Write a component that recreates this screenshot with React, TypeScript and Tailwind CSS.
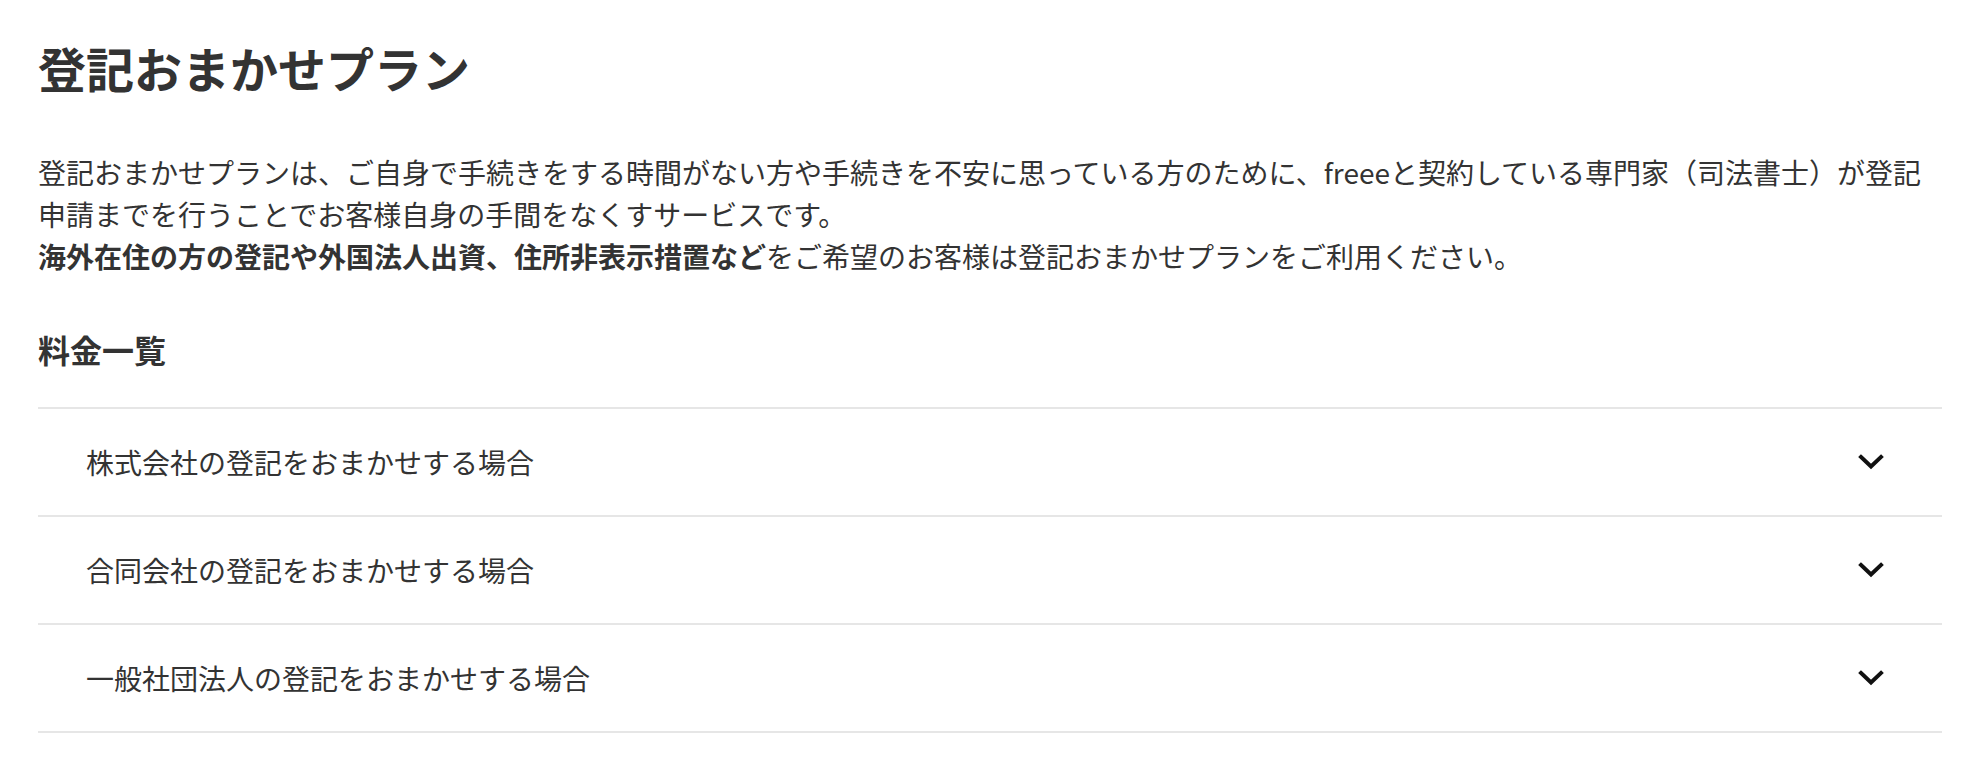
import React from 'react';

const plans = [
  '株式会社の登記をおまかせする場合',
  '合同会社の登記をおまかせする場合',
  '一般社団法人の登記をおまかせする場合',
];

function Chevron() {
  return (
    <svg width="26" height="16" viewBox="0 0 26 16" fill="none" aria-hidden="true">
      <path d="M3 3L13 12.5L23 3" stroke="#111" strokeWidth="4" strokeLinecap="square" />
    </svg>
  );
}

export default function App() {
  return (
    <div
      className="min-h-[764px] bg-white pl-[38px] pr-[42px] pt-[31px] text-[#333]"
      style={{ fontFamily: '"Noto Sans CJK JP", "Noto Sans", sans-serif' }}
    >
      <h1 className="text-[48px] font-bold leading-[72px]">登記おまかせプラン</h1>

      <p className="mt-[48px] text-[28px] leading-[42px]">
        登記おまかせプランは、ご自身で手続きをする時間がない方や手続きを不安に思っている方のために、freeeと契約している専門家（司法書士）が登記申請までを行うことでお客様自身の手間をなくすサービスです。
        <br />
        <strong className="font-bold">海外在住の方の登記や外国法人出資、住所非表示措置など</strong>
        をご希望のお客様は登記おまかせプランをご利用ください。
      </p>

      <h2 className="mt-[48px] text-[32px] font-bold leading-[48px]">料金一覧</h2>

      <div className="mt-[34px] border-b-2 border-[#e6e6e6]">
        {plans.map((plan) => (
          <button
            key={plan}
            type="button"
            className="flex h-[108px] w-full items-center justify-between border-t-2 border-[#e6e6e6] pl-[48px] pr-[58px] text-left"
          >
            <span className="text-[28px] leading-[42px] text-[#333]">{plan}</span>
            <Chevron />
          </button>
        ))}
      </div>
    </div>
  );
}
